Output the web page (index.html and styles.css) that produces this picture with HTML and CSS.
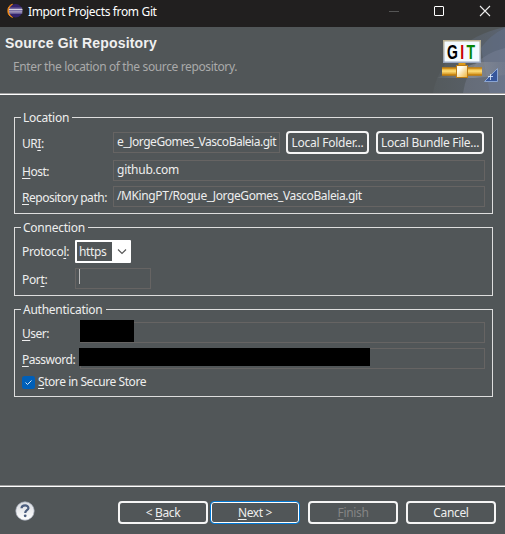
FILE: index.html
```html
<!DOCTYPE html>
<html lang="en">
<head>
<meta charset="utf-8">
<title>Import Projects from Git</title>
<link rel="stylesheet" href="styles.css">
</head>
<body>
<div class="window">
  <header class="titlebar">
    <svg class="app-icon" width="16" height="16" viewBox="0 0 16 16">
      <path d="M5.5 1.2A7 7 0 0 0 5.5 14.400A8.500 8.500 0 0 1 5.500 1.200Z" fill="#f7941e" stroke="#f08a1c"/>
      <circle cx="8.700" cy="7.700" r="6.700" fill="#33236c"/>
      <path d="M2.200 5.200h13M2 7.700h13.500M2.300 10.100h13" stroke="#8d83b4" stroke-width="1"/>
      <path d="M2 6.500h13.500M2 8.900h13.300" stroke="#d6d1e2" stroke-width="1"/>
    </svg>
    <span class="title">Import Projects from Git</span>
    <svg class="controls" width="120" height="27" viewBox="0 0 120 27" fill="none">
      <path d="M4 11.500h10" stroke="#555"/>
      <rect x="49.500" y="6.500" width="9" height="9" rx=".5" stroke="#fff"/>
      <path d="M95 6l10 10M105 6L95 16" stroke="#eee" stroke-width="1.100"/>
    </svg>
  </header>
  <div class="banner">
    <div class="banner-text">
      <h1>Source Git Repository</h1>
      <p>Enter the location of the source repository.</p>
    </div>
    <svg class="banner-art" width="75" height="66" viewBox="430 27 75 66">
      <defs>
        <linearGradient id="fade" x1="0" x2="1"><stop offset="0" stop-color="#667078" stop-opacity=".35"/><stop offset="1" stop-color="#66738f"/></linearGradient>
        <linearGradient id="gold" x1="0" y1="0" x2="0" y2="1"><stop offset="0" stop-color="#d58d0c"/><stop offset=".45" stop-color="#ffe07a"/><stop offset="1" stop-color="#c77d05"/></linearGradient>
        <linearGradient id="hub" x1="0" y1="0" x2="1" y2="1"><stop offset=".3" stop-color="#fffdf0"/><stop offset="1" stop-color="#efb233"/></linearGradient>
        <linearGradient id="edge" x1="0" y1="0" x2="0" y2="1"><stop offset="0" stop-color="#bdb394"/><stop offset="1" stop-color="#98a5bf"/></linearGradient>
        <linearGradient id="beam" x1="0" x2="1"><stop offset="0" stop-color="#aaa" stop-opacity=".1"/><stop offset=".5" stop-color="#aaa" stop-opacity=".45"/><stop offset="1" stop-color="#aaa" stop-opacity=".08"/></linearGradient>
      </defs>
      <path d="M433 93C438 64 462 36 505 27V93Z" fill="url(#fade)" opacity=".45"/>
      <path d="M481 48Q490 35 505 28V93H490Z" fill="#687799" opacity=".35"/>
      <path d="M463 93Q468 57 505 48V93Z" fill="#8790a5" opacity=".3"/>
      <path d="M437 78L450 72L480 62H505V75L475 78Z" fill="url(#beam)"/>
      <rect x="443.750" y="40.750" width="36.500" height="21.500" fill="#f3faff" stroke="url(#edge)" stroke-width="1.500"/>
      <g class="git" transform="translate(0 58.500) scale(.7 1)"><text x="638.500">G</text><text x="657.500" fill="#c90000">I</text><text x="666.500" fill="#078507">T</text></g>
      <rect x="458.500" y="63" width="7" height="4" fill="#dc9a18"/>
      <rect x="442" y="67.500" width="40" height="8" fill="url(#gold)"/>
      <path d="M442 68h40M442 75h40" stroke="#c17c08"/>
      <rect x="456.500" y="65.500" width="11" height="12" fill="url(#hub)" stroke="#bc7c16"/>
      <path d="M497.500 68.500V81.500H484.500Z" fill="#36569b" stroke="#8ba5d2"/>
      <path d="M490.500 74v6M488 76.500h5" stroke="#dfedff" stroke-width=".8"/>
    </svg>
  </div>
  <main>
    <section class="group location">
      <h2>Location</h2>
      <div class="row uri">
        <label>UR<u>I</u>:</label>
        <div class="field"><span class="uri-text">e_JorgeGomes_VascoBaleia.git</span></div>
        <button class="folder">Local Folder...</button>
        <button class="bundle">Local Bundle File...</button>
      </div>
      <div class="row"><label><u>H</u>ost:</label><div class="field"><span class="host-text">github.com</span></div></div>
      <div class="row"><label><u>R</u>epository path:</label><div class="field"><span class="path-text">/MKingPT/Rogue_JorgeGomes_VascoBaleia.git</span></div></div>
    </section>
    <section class="group connection">
      <h2>Connection</h2>
      <div class="row protocol">
        <label>Protoco<u>l</u>:</label>
        <div class="combo"><span>https</span><svg width="17" height="19" viewBox="0 0 17 19"><path d="M6 7.500l4 4 4-4" fill="none" stroke="#555" stroke-width="1.100"/></svg></div>
      </div>
      <div class="row"><label>Por<u>t</u>:</label><div class="field port"><i class="caret"></i></div></div>
    </section>
    <section class="group authentication">
      <h2>Authentication</h2>
      <div class="row"><label><u>U</u>ser:</label><div class="field"><i class="mask mask-user"></i></div></div>
      <div class="row"><label><u>P</u>assword:</label><div class="field"><i class="mask mask-password"></i></div></div>
      <div class="store">
        <svg width="13" height="13" viewBox="0 0 13 13"><rect width="13" height="13" rx="2.500" fill="#005fb8"/><path d="M3.500 6.500l2 2 4-4" fill="none" stroke="#d9e9f7" stroke-width="1"/></svg>
        <span><u>S</u>tore in Secure Store</span>
      </div>
    </section>
  </main>
  <footer>
    <svg class="help" width="20" height="20" viewBox="0 0 20 20"><defs><linearGradient id="ball" x1="0" y1="0" x2="0" y2="1"><stop offset="0" stop-color="#d8dbe0"/><stop offset="1" stop-color="#fff"/></linearGradient></defs><circle cx="10" cy="10" r="9.200" fill="url(#ball)" stroke="#a6adbb" stroke-width=".7"/><path d="M6.500 7.200C6.700 3.400 13.600 3.400 13.400 7.200C13.300 9.300 10.200 9.300 10.200 12" fill="none" stroke="#4b5d7e" stroke-width="2.200"/><circle cx="10.200" cy="14.800" r="1.400" fill="#4b5d7e"/></svg>
    <button>&lt; <u>B</u>ack</button>
    <button class="next"><u>N</u>ext &gt;</button>
    <button class="finish" disabled><u>F</u>inish</button>
    <button class="cancel">Cancel</button>
  </footer>
</div>
</body>
</html>
```
FILE: styles.css
```css
* { box-sizing: border-box; }
body { margin: 0; background: #515658; }
.window {
  width: 505px; height: 534px;
  display: flex; flex-direction: column;
  background: #515658; color: #eee;
  font: 12px/16px "Noto Sans", "Open Sans", sans-serif;
  letter-spacing: -0.35px;
  white-space: nowrap; overflow: hidden;
}
h1, h2, p { margin: 0; font-weight: normal; font-size: inherit; }
u { text-decoration: underline; text-underline-offset: 2px; text-decoration-thickness: 1px; text-decoration-skip-ink: none; }
.titlebar { display: flex; height: 27px; flex: none; padding-left: 7px; background: #211f1f; }
.app-icon { margin-top: 3px; }
.title { margin: 4px 0 0 5px; color: #fff; }
.controls { margin-left: auto; }
.banner { display: flex; height: 68px; flex: none; justify-content: space-between; border-bottom: 1px solid #fff; box-shadow: inset 0 -1px #a0a0a0; }
.banner-text { padding: 8px 0 0 5px; }
h1 { font: bold 14px/17px "Liberation Sans", sans-serif; letter-spacing: .2px; color: #f0f0f0; }
.banner p { margin: 7px 0 0 8px; color: #aaa; letter-spacing: -0.37px; }
.git { font: bold 20px "Liberation Sans", sans-serif; letter-spacing: 0; }
main { padding: 22px 12px 0 14px; flex: 1; display: flex; flex-direction: column; }
.group { border: 1px solid #dedede; padding: 0 7px; }
.group h2 { width: max-content; height: 16px; line-height: 18px; margin: -9px 0 0 -1px; padding: 0 3px 0 2px; background: #515658; letter-spacing: -0.25px; }
.location { height: 97px; }
.connection { height: 69px; margin-top: 13px; }
.authentication { height: 88px; margin-top: 13px; }
.row { display: flex; height: 21px; margin-top: 5px; }
.row label { width: 91px; flex: none; padding-top: 4px; letter-spacing: -0.48px; }
.field { flex: 1; height: 21px; border: 1px solid #666463; padding-left: 3px; overflow: hidden; }
.field span { display: block; margin-top: 1px; }
.uri { height: 23px; margin: 6px 1px 6px 0; align-items: center; }
.uri label { padding-top: 2px; }
.location .uri + .row { margin-top: 0; }
.uri .field { flex: 0 0 167px; }
.uri-text { letter-spacing: -0.48px; }
.host-text { letter-spacing: -0.25px; }
.path-text { letter-spacing: -0.4px; }
button {
  width: 90px; height: 23px; padding: 1px 0 0; flex: none;
  border: 2px solid #f5f5f5; border-radius: 4px; background: #515658;
  color: #eee; font: inherit; letter-spacing: inherit; text-align: center;
}
.folder { width: 83px; margin-left: 6px; letter-spacing: -0.25px; }
.bundle { width: 108px; margin-left: 7px; letter-spacing: -0.3px; }
.connection .row label { width: 53px; letter-spacing: -0.35px; }
.protocol { height: 23px; margin-top: 5px; }
.combo { display: flex; width: 56px; height: 23px; padding: 2px; border-radius: 1px; background: #fff; }
.combo span { width: 35px; height: 19px; padding: 2px 0 0 2px; background: #515658; }
.field.port { flex: 0 0 76px; }
.caret { display: block; width: 1px; height: 15px; background: #bbb; }
.authentication .row label { width: 58px; }
.authentication .field { position: relative; overflow: visible; }
.mask { position: absolute; background: #000; }
.mask-user { left: -1px; top: -3px; width: 54px; height: 22px; }
.mask-password { left: -2px; top: -1px; width: 291px; height: 18px; }
.store { display: flex; align-items: center; margin-top: 5px; gap: 3px; letter-spacing: -0.44px; }
footer { display: flex; height: 49px; flex: none; padding: 15px 9px 0 15px; border-top: 1px solid #a0a0a0; box-shadow: inset 0 1px #fff; }
.help { margin-right: 83px; }
.next { width: 90px; border: 1px solid #0078d4; box-shadow: inset 0 0 0 1px #fff; margin-left: 2px; }
.finish { margin-left: 8px; color: #858585; }
.cancel { margin-left: 8px; }
```
